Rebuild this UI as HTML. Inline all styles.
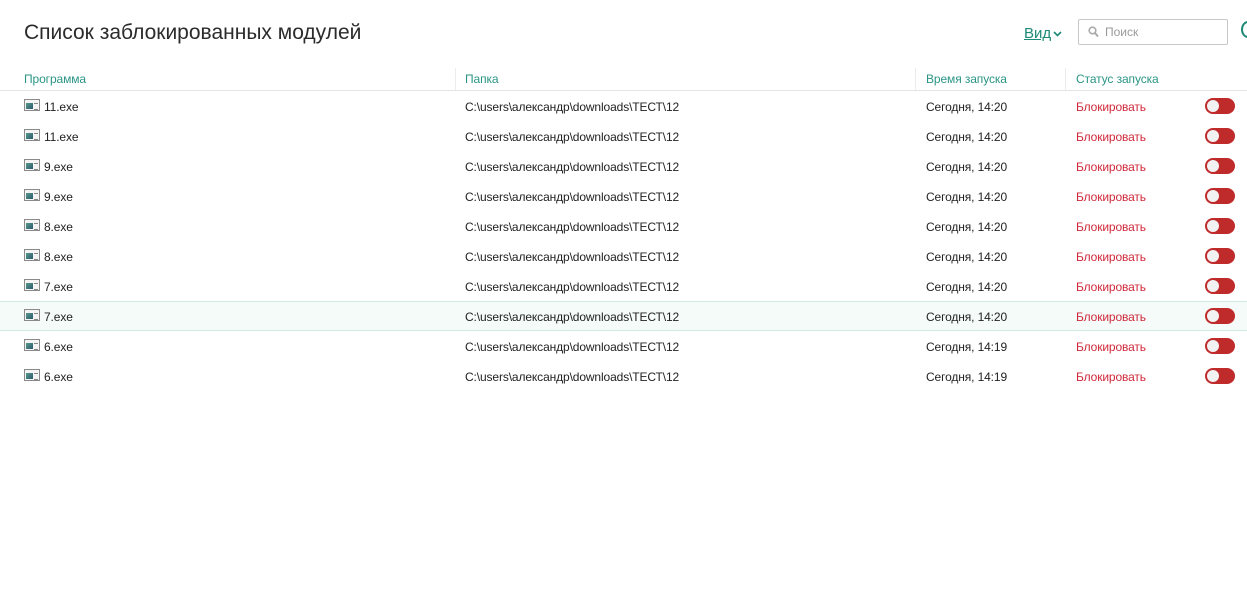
<!DOCTYPE html>
<html><head><meta charset="utf-8"><style>
*{margin:0;padding:0;box-sizing:border-box}
body{width:1247px;height:614px;background:#fff;font-family:"Segoe UI","Liberation Sans","Noto Sans CJK SC",sans-serif;position:relative;overflow:hidden;color:#222}
.title{position:absolute;left:24px;top:21px;font-size:21px;color:#2b2b2b;font-weight:400}
.vid{position:absolute;left:1024px;top:25px;font-size:15px;color:#1e8a78;text-decoration:underline}
.chev{position:absolute;left:1053px;top:31px}
.search{position:absolute;left:1078px;top:19px;width:150px;height:26px;border:1px solid #c8c8c8;border-radius:2px}
.search span{position:absolute;left:26px;top:5px;font-size:12px;color:#999}
.search svg{position:absolute;left:9px;top:6px}
.cut{position:absolute;left:1241px;top:21px;width:14px;height:17px;border:2.5px solid #1e8a78;border-radius:50%}
.hdr{position:absolute;top:72px;font-size:12px;color:#2a9585;letter-spacing:-0.1px}
.vl{position:absolute;top:68px;width:1px;height:22px;background:#ececec}
.hl{position:absolute;left:0;top:90px;width:1247px;height:1px;background:#e4e4e4}
.row{position:absolute;left:0;width:1247px;height:30px;font-size:12px;color:#222;letter-spacing:-0.12px}
.row.sel{background:#f4fbf9;border-top:1px solid #cfe9e3;border-bottom:1px solid #cfe9e3}
.row div{position:absolute;top:9px}
.ic{position:absolute;left:24px;top:8px;width:16px;height:12px;border:1px solid #8a8a8a;background:#f4f4f4}
.ic:before{content:"";position:absolute;left:1px;top:3px;width:7px;height:6px;background:linear-gradient(135deg,#5a9a8a,#2a5a70)}
.ic:after{content:"";position:absolute;left:9px;top:3px;width:4px;height:5px;border-top:1px solid #888;border-bottom:1px solid #888}
.red{color:#d0283a}
.tg{position:absolute;left:1205px;top:7px;width:30px;height:16px;border-radius:8px;background:#bf2a2a}
.tg:after{content:"";position:absolute;left:2px;top:2px;width:12px;height:12px;border-radius:50%;background:#f2f2f2}
</style></head><body>
<div class="title">Список заблокированных модулей</div>
<div class="vid">Вид</div>
<svg class="chev" width="9" height="6" viewBox="0 0 9 6"><path d="M1 1l3.5 3.5L8 1" stroke="#1e8a78" stroke-width="1.6" fill="none"/></svg>
<div class="search"><svg width="11" height="12" viewBox="0 0 11 12"><circle cx="4.5" cy="4.5" r="3.3" stroke="#aaa" stroke-width="1.6" fill="none"/><path d="M7 7l3 3.5" stroke="#aaa" stroke-width="2"/></svg><span>Поиск</span></div>
<div class="cut"></div>
<div class="hdr" style="left:24px">Программа</div>
<div class="vl" style="left:455px"></div>
<div class="hdr" style="left:465px">Папка</div>
<div class="vl" style="left:915px"></div>
<div class="hdr" style="left:926px">Время запуска</div>
<div class="vl" style="left:1065px"></div>
<div class="hdr" style="left:1076px">Статус запуска</div>
<div class="hl"></div>

<div class="row" style="top:91px"><span class="ic"></span><div style="left:44px">11.exe</div><div style="left:465px">C:\users\александр\downloads\ТЕСТ\12</div><div style="left:926px">Сегодня, 14:20</div><div class="red" style="left:1076px">Блокировать</div><span class="tg"></span></div>
<div class="row" style="top:121px"><span class="ic"></span><div style="left:44px">11.exe</div><div style="left:465px">C:\users\александр\downloads\ТЕСТ\12</div><div style="left:926px">Сегодня, 14:20</div><div class="red" style="left:1076px">Блокировать</div><span class="tg"></span></div>
<div class="row" style="top:151px"><span class="ic"></span><div style="left:44px">9.exe</div><div style="left:465px">C:\users\александр\downloads\ТЕСТ\12</div><div style="left:926px">Сегодня, 14:20</div><div class="red" style="left:1076px">Блокировать</div><span class="tg"></span></div>
<div class="row" style="top:181px"><span class="ic"></span><div style="left:44px">9.exe</div><div style="left:465px">C:\users\александр\downloads\ТЕСТ\12</div><div style="left:926px">Сегодня, 14:20</div><div class="red" style="left:1076px">Блокировать</div><span class="tg"></span></div>
<div class="row" style="top:211px"><span class="ic"></span><div style="left:44px">8.exe</div><div style="left:465px">C:\users\александр\downloads\ТЕСТ\12</div><div style="left:926px">Сегодня, 14:20</div><div class="red" style="left:1076px">Блокировать</div><span class="tg"></span></div>
<div class="row" style="top:241px"><span class="ic"></span><div style="left:44px">8.exe</div><div style="left:465px">C:\users\александр\downloads\ТЕСТ\12</div><div style="left:926px">Сегодня, 14:20</div><div class="red" style="left:1076px">Блокировать</div><span class="tg"></span></div>
<div class="row" style="top:271px"><span class="ic"></span><div style="left:44px">7.exe</div><div style="left:465px">C:\users\александр\downloads\ТЕСТ\12</div><div style="left:926px">Сегодня, 14:20</div><div class="red" style="left:1076px">Блокировать</div><span class="tg"></span></div>
<div class="row sel" style="top:301px"><span class="ic" style="top:7px"></span><div style="left:44px;top:8px">7.exe</div><div style="left:465px;top:8px">C:\users\александр\downloads\ТЕСТ\12</div><div style="left:926px;top:8px">Сегодня, 14:20</div><div class="red" style="left:1076px;top:8px">Блокировать</div><span class="tg" style="top:6px"></span></div>
<div class="row" style="top:331px"><span class="ic"></span><div style="left:44px">6.exe</div><div style="left:465px">C:\users\александр\downloads\ТЕСТ\12</div><div style="left:926px">Сегодня, 14:19</div><div class="red" style="left:1076px">Блокировать</div><span class="tg"></span></div>
<div class="row" style="top:361px"><span class="ic"></span><div style="left:44px">6.exe</div><div style="left:465px">C:\users\александр\downloads\ТЕСТ\12</div><div style="left:926px">Сегодня, 14:19</div><div class="red" style="left:1076px">Блокировать</div><span class="tg"></span></div>
</body></html>
